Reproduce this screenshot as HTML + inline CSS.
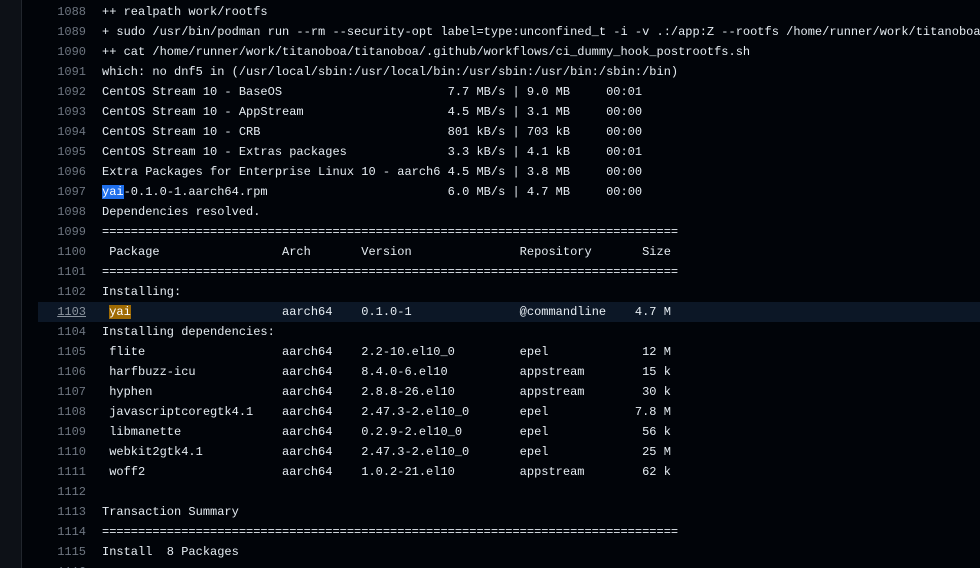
<!DOCTYPE html>
<html style="width:980px;height:568px;overflow:hidden;"><head><style>
body{margin:0;width:980px;height:568px;overflow:hidden;background:#010409;font-family:"Liberation Mono",monospace;font-size:12px;position:relative;}
.side{position:absolute;left:0;top:0;width:21px;height:568px;background:#0d1117;border-right:1px solid #21262d;}
.log{position:absolute;left:38px;top:2px;width:942px;height:566px;overflow:hidden;}
.r{height:20px;line-height:20px;white-space:pre;color:#e6edf3;position:relative;}
.r .n{display:inline-block;width:48px;text-align:right;color:#6e7681;margin-right:16px;}
.hl{background:#0c1726;}
.hl .n{text-decoration:underline;color:#8b949e;}
.b{background:#1f6feb;color:#fff;}
.o{background:#9e6a03;color:#fff;}
</style></head><body>
<div class="side"></div>
<div class="log">
<div class="r"><span class="n">1088</span>++ realpath work/rootfs</div>
<div class="r"><span class="n">1089</span>+ sudo /usr/bin/podman run --rm --security-opt label=type:unconfined_t -i -v .:/app:Z --rootfs /home/runner/work/titanoboa/titanoboa/work/rootfs</div>
<div class="r"><span class="n">1090</span>++ cat /home/runner/work/titanoboa/titanoboa/.github/workflows/ci_dummy_hook_postrootfs.sh</div>
<div class="r"><span class="n">1091</span>which: no dnf5 in (/usr/local/sbin:/usr/local/bin:/usr/sbin:/usr/bin:/sbin:/bin)</div>
<div class="r"><span class="n">1092</span>CentOS Stream 10 - BaseOS                       7.7 MB/s | 9.0 MB     00:01</div>
<div class="r"><span class="n">1093</span>CentOS Stream 10 - AppStream                    4.5 MB/s | 3.1 MB     00:00</div>
<div class="r"><span class="n">1094</span>CentOS Stream 10 - CRB                          801 kB/s | 703 kB     00:00</div>
<div class="r"><span class="n">1095</span>CentOS Stream 10 - Extras packages              3.3 kB/s | 4.1 kB     00:01</div>
<div class="r"><span class="n">1096</span>Extra Packages for Enterprise Linux 10 - aarch6 4.5 MB/s | 3.8 MB     00:00</div>
<div class="r"><span class="n">1097</span><span class="b">yai</span>-0.1.0-1.aarch64.rpm                         6.0 MB/s | 4.7 MB     00:00</div>
<div class="r"><span class="n">1098</span>Dependencies resolved.</div>
<div class="r"><span class="n">1099</span>================================================================================</div>
<div class="r"><span class="n">1100</span> Package                 Arch       Version               Repository       Size</div>
<div class="r"><span class="n">1101</span>================================================================================</div>
<div class="r"><span class="n">1102</span>Installing:</div>
<div class="r hl"><span class="n">1103</span> <span class="o">yai</span>                     aarch64    0.1.0-1               @commandline    4.7 M</div>
<div class="r"><span class="n">1104</span>Installing dependencies:</div>
<div class="r"><span class="n">1105</span> flite                   aarch64    2.2-10.el10_0         epel             12 M</div>
<div class="r"><span class="n">1106</span> harfbuzz-icu            aarch64    8.4.0-6.el10          appstream        15 k</div>
<div class="r"><span class="n">1107</span> hyphen                  aarch64    2.8.8-26.el10         appstream        30 k</div>
<div class="r"><span class="n">1108</span> javascriptcoregtk4.1    aarch64    2.47.3-2.el10_0       epel            7.8 M</div>
<div class="r"><span class="n">1109</span> libmanette              aarch64    0.2.9-2.el10_0        epel             56 k</div>
<div class="r"><span class="n">1110</span> webkit2gtk4.1           aarch64    2.47.3-2.el10_0       epel             25 M</div>
<div class="r"><span class="n">1111</span> woff2                   aarch64    1.0.2-21.el10         appstream        62 k</div>
<div class="r"><span class="n">1112</span></div>
<div class="r"><span class="n">1113</span>Transaction Summary</div>
<div class="r"><span class="n">1114</span>================================================================================</div>
<div class="r"><span class="n">1115</span>Install  8 Packages</div>
<div class="r"><span class="n">1116</span></div>
</div>
</body></html>
